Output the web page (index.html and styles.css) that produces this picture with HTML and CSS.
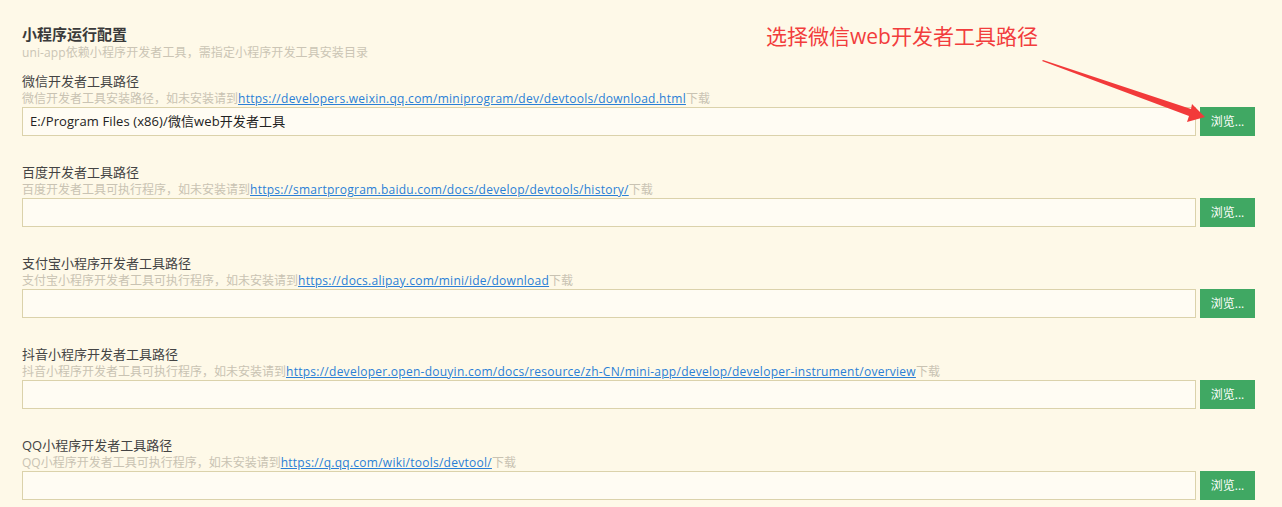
FILE: index.html
```html
<!DOCTYPE html>
<html lang="zh-CN">
<head>
<meta charset="utf-8">
<title>小程序运行配置</title>
<link rel="stylesheet" href="styles.css">
</head>
<body>
<div class="page">
  <div class="header">
    <div class="title">小程序运行配置</div>
    <div class="subtitle">uni-app依赖小程序开发者工具，需指定小程序开发工具安装目录</div>
  </div>

  <div class="field">
    <div class="label">微信开发者工具路径</div>
    <div class="hint">微信开发者工具安装路径，如未安装请到<a href="#">https://developers.weixin.qq.com/miniprogram/dev/devtools/download.html</a>下载</div>
    <div class="row">
      <div class="input">E:/Program Files (x86)/微信web开发者工具</div>
      <div class="btn">浏览...</div>
    </div>
  </div>

  <div class="field">
    <div class="label">百度开发者工具路径</div>
    <div class="hint">百度开发者工具可执行程序，如未安装请到<a href="#">https://smartprogram.baidu.com/docs/develop/devtools/history/</a>下载</div>
    <div class="row">
      <div class="input"></div>
      <div class="btn">浏览...</div>
    </div>
  </div>

  <div class="field">
    <div class="label">支付宝小程序开发者工具路径</div>
    <div class="hint">支付宝小程序开发者工具可执行程序，如未安装请到<a href="#">https://docs.alipay.com/mini/ide/download</a>下载</div>
    <div class="row">
      <div class="input"></div>
      <div class="btn">浏览...</div>
    </div>
  </div>

  <div class="field">
    <div class="label">抖音小程序开发者工具路径</div>
    <div class="hint">抖音小程序开发者工具可执行程序，如未安装请到<a href="#">https://developer.open-douyin.com/docs/resource/zh-CN/mini-app/develop/developer-instrument/overview</a>下载</div>
    <div class="row">
      <div class="input"></div>
      <div class="btn">浏览...</div>
    </div>
  </div>

  <div class="field">
    <div class="label">QQ小程序开发者工具路径</div>
    <div class="hint">QQ小程序开发者工具可执行程序，如未安装请到<a href="#">https://q.qq.com/wiki/tools/devtool/</a>下载</div>
    <div class="row">
      <div class="input"></div>
      <div class="btn">浏览...</div>
    </div>
  </div>

  <div class="note">选择微信web开发者工具路径</div>
  <svg class="arrow" width="1282" height="507" viewBox="0 0 1282 507">
    <polygon points="1042,61 1043,60 1191,109 1192,104 1205,117 1187,122 1189,116" fill="#f23a3a"/>
  </svg>
</div>
</body>
</html>
```

FILE: styles.css
```css
html, body {
  margin: 0;
  padding: 0;
  overflow: hidden;
  background: #fef9e8;
}
body {
  font-family: "Open Sans", "Noto Sans CJK SC", sans-serif;
  color: #333;
}
.page {
  position: relative;
  padding: 24px 27px 0 22px;
  height: 507px;
  box-sizing: border-box;
}
.header {
  margin-bottom: 10px;
}
.title {
  font-size: 15px;
  font-weight: bold;
  line-height: 20px;
  color: #3a3a3a;
}
.subtitle {
  font-size: 12px;
  line-height: 18px;
  color: #cbc5b5;
  letter-spacing: 0.1px;
}
.field {
  margin-bottom: 27px;
}
.label {
  font-size: 13px;
  line-height: 18px;
  color: #444;
}
.hint {
  font-size: 12px;
  line-height: 17px;
  color: #c9c3b3;
  white-space: nowrap;
}
.hint a {
  color: #2a7fd6;
  text-decoration: underline;
  letter-spacing: 0.26px;
}
.row {
  display: flex;
  gap: 4px;
  height: 29px;
}
.input {
  flex: 1;
  box-sizing: border-box;
  border: 1px solid #dbd2ab;
  background: #fffcf3;
  font-size: 13px;
  line-height: 27px;
  padding: 0 7px;
  color: #222;
  letter-spacing: 0.1px;
}
.btn {
  width: 55px;
  background: #40a863;
  color: #fff;
  font-size: 12px;
  line-height: 29px;
  text-align: center;
}
.note {
  position: absolute;
  left: 766px;
  top: 22px;
  font-size: 21px;
  line-height: 28px;
  color: #f23d3d;
}
.arrow {
  position: absolute;
  left: 0;
  top: 0;
  pointer-events: none;
}
```
